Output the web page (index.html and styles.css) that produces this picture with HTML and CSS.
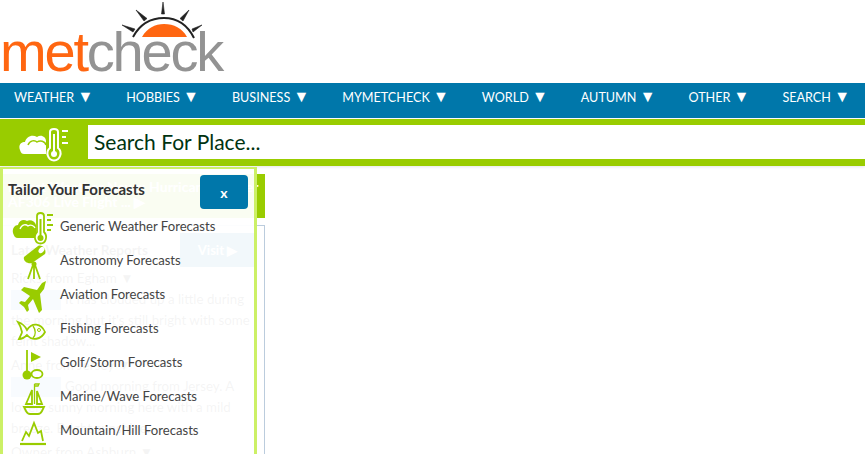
FILE: index.html
```html
<!DOCTYPE html>
<html lang="en">
<head>
<meta charset="utf-8">
<title>Metcheck</title>
<link rel="stylesheet" href="styles.css">
</head>
<body>
<header class="logo-bar">
  <div class="logo">
    <svg class="sun" width="100" height="40" viewBox="120 0 100 40" aria-hidden="true">
      <path d="M142 37 C147 28 155 24 164 24 C174 24 182 28 187 37 Z" fill="#ff6611"/>
      <path d="M133 37 C140 24 151 18 164 18 C176 18 187 24 194 38" fill="none" stroke="#222" stroke-width="2"/>
      <path d="M161.500 14 L163 2 L164.500 14 Z M144 21 L136 10 L147 18.500 Z M180 18.500 L189 10 L183 21 Z M133 32 L122 25 L135 29 Z M192 29 L202 25 L193 32 Z" fill="#222" stroke="#222" stroke-width=".6"/>
    </svg>
    <span class="logo-text"><span class="logo-met">met</span><span class="logo-check">check</span></span>
  </div>
</header>
<nav class="main-nav">
  <a class="nav-item">WEATHER <span class="caret">▼</span></a>
  <a class="nav-item">HOBBIES <span class="caret">▼</span></a>
  <a class="nav-item">BUSINESS <span class="caret">▼</span></a>
  <a class="nav-item">MYMETCHECK <span class="caret">▼</span></a>
  <a class="nav-item">WORLD <span class="caret">▼</span></a>
  <a class="nav-item">AUTUMN <span class="caret">▼</span></a>
  <a class="nav-item">OTHER <span class="caret">▼</span></a>
  <a class="nav-item">SEARCH <span class="caret">▼</span></a>
</nav>
<div class="search-bar">
  <div class="search-icon">
    <svg width="50" height="36" viewBox="0 0 50 36" aria-hidden="true">
      <path d="M1 24 C-1 19 2 16 6 16 C7 11 13 8 18 11 C22 8 27 11 27 15 L27 28 L5 28 C3 28 2 27 1 24 Z" fill="#fff"/>
      <path d="M9 19 C11 14 16 14 18 16 C21 14 26 15 27 19" fill="none" stroke="#99cc00" stroke-width="1.500"/>
      <path d="M31 6 C31 2 39 2 39 6 L39 22 C44 26 41 34.500 35 34.500 C29 34.500 26 26 31 22 Z" fill="none" stroke="#fff" stroke-width="2"/>
      <path d="M35 8 L35 27" stroke="#fff" stroke-width="2"/>
      <circle cx="35" cy="28" r="3" fill="#fff"/>
      <path d="M43 5 H49 M43 11 H47 M43 17 H49" stroke="#fff" stroke-width="2"/>
    </svg>
  </div>
  <div class="search-field">Search For Place...</div>
</div>

<main class="content">
  <h2 class="headline">Latest Weather News: Hurricane Hunter<br>AF306 Live Flight ... ▶</h2>
  <section class="reports">
    <div class="reports-head">
      <h3 class="reports-title">Later Weather Reports</h3>
      <a class="visit">Visit ▶</a>
    </div>
    <h4 class="who">Ricks from Egham ▼</h4>
    <p class="report"><span class="thumb"></span>It has clouded up a little during the morning but it's still bright with some feint shadow...</p>
    <h4 class="who">Anne from Jersey ▼</h4>
    <p class="report"><span class="thumb"></span>Good morning from Jersey. A lovely sunny morning here with a mild breeze. Bright sunshine.</p>
    <h4 class="who">Owner from Ashburn ▼</h4>
  </section>
</main>

<aside class="tailor">
  <div class="tailor-head">
    <h3 class="tailor-title">Tailor Your Forecasts</h3>
    <button class="close">x</button>
  </div>
  <ul class="tailor-list">
    <li class="tailor-row">
      <svg class="ticon" width="42" height="36" viewBox="0 0 42 36" aria-hidden="true">
        <path d="M0 25 C-1 20 2 17 5 17 C6 12 11 11 14 13 C17 11 22 13 23 17 L23 30 L5 30 C2 30 1 28 0 25 Z" fill="#99cc00"/>
        <path d="M7 21 C9 16 13 16 15 18 C18 16 21 18 22 20" fill="none" stroke="#fff" stroke-width="1.300"/>
        <path d="M24 8 C24 4 31 4 31 8 L31 24 C35 28 33 35.500 27.500 35.500 C22 35.500 20 28 24 24 Z" fill="#fff" stroke="#99cc00" stroke-width="1.800"/>
        <path d="M27.500 11 L27.500 30" stroke="#99cc00" stroke-width="2"/>
        <circle cx="27.500" cy="30" r="3" fill="#99cc00"/>
        <path d="M34 7 H40 M34 12 H38 M34 17 H40 M34 22 H38" stroke="#99cc00" stroke-width="1.800"/>
      </svg>
      <span class="tlabel">Generic Weather Forecasts</span>
    </li>
    <li class="tailor-row">
      <svg class="ticon" width="42" height="36" viewBox="0 0 42 36" aria-hidden="true">
        <path d="M11 15 L25 4 C29 2 34 7 32 12 L19 21 C14 22 10 19 11 15 Z" fill="#99cc00"/>
        <ellipse cx="28.500" cy="8" rx="2.500" ry="3.500" fill="#fff" transform="rotate(40 28.500 8)"/>
        <circle cx="21" cy="22" r="2.500" fill="#99cc00"/>
        <path d="M21 23 L21 37 M20 23 L15 37 M22 23 L27 37" stroke="#99cc00" stroke-width="1.800"/>
      </svg>
      <span class="tlabel">Astronomy Forecasts</span>
    </li>
    <li class="tailor-row">
      <svg class="ticon" width="42" height="36" viewBox="13 276 42 36" aria-hidden="true">
        <path d="M46 281 L44 289 L40 294 L42 310 L39 313 L33 299 L28 305 L29 310 L27 312 L24 307 L19 303 L21 301 L25 302 L30 296 L21 290 L24 287 L37 290 L42 283 Z" fill="#99cc00"/>
      </svg>
      <span class="tlabel">Aviation Forecasts</span>
    </li>
    <li class="tailor-row">
      <svg class="ticon" width="42" height="36" viewBox="13 310 42 36" aria-hidden="true">
        <path d="M27 330 C32 322 41 323 45 332 C41 340 32 341 27 335 C25 337 22 339 19 339 C21 335 22 333 22 332 C21 328 20 325 18 322 C21 323 25 326 27 330 Z" fill="#fff" stroke="#99cc00" stroke-width="1.800"/>
        <path d="M33 326 C36 330 36 335 33 338" fill="none" stroke="#99cc00" stroke-width="1.300"/>
        <circle cx="39" cy="330" r="1.500" fill="none" stroke="#99cc00" stroke-width="1"/>
      </svg>
      <span class="tlabel">Fishing Forecasts</span>
    </li>
    <li class="tailor-row">
      <svg class="ticon" width="42" height="36" viewBox="0 0 42 36" aria-hidden="true">
        <path d="M14 6 L14 31" stroke="#99cc00" stroke-width="1.800"/>
        <path d="M18 8 L28 13 L18 18 Z" fill="#99cc00"/>
        <circle cx="14" cy="31" r="4.500" fill="#99cc00"/>
        <ellipse cx="24" cy="30" rx="5.500" ry="4" fill="#fff" stroke="#99cc00" stroke-width="1.800"/>
      </svg>
      <span class="tlabel">Golf/Storm Forecasts</span>
    </li>
    <li class="tailor-row">
      <svg class="ticon" width="42" height="36" viewBox="0 0 42 36" aria-hidden="true">
        <path d="M21.500 6 L21.500 26 M21.500 6 L26 6 L25 8 L21.500 8" fill="none" stroke="#99cc00" stroke-width="1.300"/>
        <path d="M19 12 L19 26 L13 26 Z M24 13 L24 26 L29 26 Z" fill="none" stroke="#99cc00" stroke-width="1.800"/>
        <path d="M11 29 H31 L29 33 C28 35 27 36 25 36 H17 C15 36 14 35 13 33 Z" fill="none" stroke="#99cc00" stroke-width="1.800"/>
      </svg>
      <span class="tlabel">Marine/Wave Forecasts</span>
    </li>
    <li class="tailor-row">
      <svg class="ticon" width="42" height="36" viewBox="0 0 42 36" aria-hidden="true">
        <path d="M9 29 L13 20 L16 24 L21 11 L25 21 L28 19 L30 29" fill="none" stroke="#99cc00" stroke-width="1.800"/>
        <path d="M7 32 H33" stroke="#99cc00" stroke-width="2.200"/>
      </svg>
      <span class="tlabel">Mountain/Hill Forecasts</span>
    </li>
  </ul>
</aside>
</body>
</html>
```
FILE: styles.css
```css
* { box-sizing: border-box; }
html, body { margin: 0; padding: 0; height: 454px; overflow: hidden; background: #fff; font-family: Lato, "Noto Sans", sans-serif; }
h2, h3, h4, p, ul { margin: 0; padding: 0; }

.logo-bar { height: 83px; padding-left: 2px; }
.logo { position: relative; height: 83px; }
.sun { position: absolute; left: 118px; top: 0; }
.logo-text { position: absolute; left: -2px; top: 20px; font-family: "Liberation Sans", Arial, sans-serif; font-size: 56px; line-height: 64px; letter-spacing: -2.200px; white-space: nowrap; }
.logo-met { color: #ff6611; }
.logo-check { color: #939393; }

.main-nav { height: 35px; background: #0077aa; display: flex; align-items: center; gap: 33px; padding: 0 0 9px 14px; white-space: nowrap; overflow: hidden; }
.nav-item { color: #fff; font-size: 12.600px; }
.caret { font-size: 16px; line-height: 16px; }

.search-bar { margin-top: 1px; height: 47px; background: #99cc00; display: flex; padding: 6px 0 7px; box-shadow: 0 1px 3px rgba(0,0,0,.1); }
.search-icon { width: 88px; padding: 1px 0 0 19px; }
.search-field { flex: 1; background: #fff; color: #003311; font-size: 21px; line-height: 34px; padding-left: 6px; }

.content { width: 265px; padding-top: 8px; }
.headline { background: #99cc00; color: #fff; font-size: 14px; line-height: 15px; padding: 5px 0 5px 8px; height: 44px; font-weight: 700; white-space: nowrap; overflow: hidden; }
.reports { margin-top: 7px; height: 240px; border: 1px solid #bcd; padding: 7px 9px 0 10px; color: #333; }
.reports-head { display: flex; justify-content: space-between; align-items: center; height: 34px; }
.reports-title { font-size: 13.600px; font-weight: 700; }
.visit { width: 75px; height: 34px; background: #0077aa; color: #fff; font-size: 13px; font-weight: 700; display: flex; align-items: center; justify-content: center; }
.who { font-size: 13.500px; font-weight: 400; line-height: 22px; }
.report { font-size: 13.300px; line-height: 21px; margin: 0 -8px 2px 0; }
.thumb { float: left; width: 50px; height: 20px; margin: 1px 4px 0 0; background: #7fb6dc; }

.tailor { position: absolute; left: 0; top: 167px; width: 257px; height: 300px; background: rgba(255,255,255,.95); border-style: solid; border-color: #ccf066; border-width: 2px 3px 0 3px; }
.tailor-head { height: 40px; position: relative; padding: 10px 0 0 5px; }
.tailor-title { font-size: 15px; font-weight: 700; color: #333; line-height: 20px; }
.close { position: absolute; left: 197px; top: 6px; width: 48px; height: 34px; border: 0; border-radius: 4px; background: #0077aa; color: #fff; font: 700 14px Lato, sans-serif; }
.tailor-list { list-style: none; }
.tailor-row { display: flex; align-items: center; height: 34px; color: #444; }
.ticon { flex: none; margin-left: 10px; overflow: visible; }
.tlabel { font-size: 13.100px; margin-left: 5px; }
```
